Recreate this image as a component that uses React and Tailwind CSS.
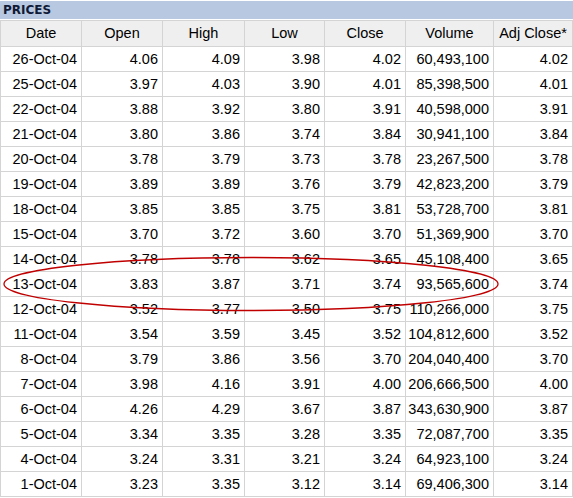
import React from "react";

const rows = [
  ["26-Oct-04", "4.06", "4.09", "3.98", "4.02", "60,493,100", "4.02"],
  ["25-Oct-04", "3.97", "4.03", "3.90", "4.01", "85,398,500", "4.01"],
  ["22-Oct-04", "3.88", "3.92", "3.80", "3.91", "40,598,000", "3.91"],
  ["21-Oct-04", "3.80", "3.86", "3.74", "3.84", "30,941,100", "3.84"],
  ["20-Oct-04", "3.78", "3.79", "3.73", "3.78", "23,267,500", "3.78"],
  ["19-Oct-04", "3.89", "3.89", "3.76", "3.79", "42,823,200", "3.79"],
  ["18-Oct-04", "3.85", "3.85", "3.75", "3.81", "53,728,700", "3.81"],
  ["15-Oct-04", "3.70", "3.72", "3.60", "3.70", "51,369,900", "3.70"],
  ["14-Oct-04", "3.78", "3.78", "3.62", "3.65", "45,108,400", "3.65"],
  ["13-Oct-04", "3.83", "3.87", "3.71", "3.74", "93,565,600", "3.74"],
  ["12-Oct-04", "3.52", "3.77", "3.50", "3.75", "110,266,000", "3.75"],
  ["11-Oct-04", "3.54", "3.59", "3.45", "3.52", "104,812,600", "3.52"],
  ["8-Oct-04", "3.79", "3.86", "3.56", "3.70", "204,040,400", "3.70"],
  ["7-Oct-04", "3.98", "4.16", "3.91", "4.00", "206,666,500", "4.00"],
  ["6-Oct-04", "4.26", "4.29", "3.67", "3.87", "343,630,900", "3.87"],
  ["5-Oct-04", "3.34", "3.35", "3.28", "3.35", "72,087,700", "3.35"],
  ["4-Oct-04", "3.24", "3.31", "3.21", "3.24", "64,923,100", "3.24"],
  ["1-Oct-04", "3.23", "3.35", "3.12", "3.14", "69,406,300", "3.14"],
];

const headers = ["Date", "Open", "High", "Low", "Close", "Volume", "Adj Close*"];

export default function App() {
  return (
    <div className="w-[573px] h-[498px] bg-white relative overflow-hidden">
      <div className="mt-px h-[18px] bg-[#b8c8e1] flex items-center pl-[3px]">
        <span
          className="text-[12px] font-bold text-[#101a36] leading-none"
          style={{ fontFamily: '"DejaVu Sans", Verdana, sans-serif' }}
        >
          PRICES
        </span>
      </div>
      <div
        className="mt-px grid grid-cols-[80px_80px_81px_79px_80px_87px_78px] gap-px bg-[#d4d4d4] p-px text-[14.5px] text-black"
        style={{ fontFamily: '"Liberation Sans", Arial, sans-serif' }}
      >
        {headers.map((h) => (
          <div key={h} className="h-[25px] bg-[#efefef] flex items-center justify-center leading-none">
            {h}
          </div>
        ))}
        {rows.map((r, i) =>
          r.map((c, j) => (
            <div
              key={i + "-" + j}
              className="h-[24px] bg-white flex items-center justify-end pr-[4px] leading-none"
            >
              {c}
            </div>
          ))
        )}
      </div>
      <svg className="absolute left-0 top-0 pointer-events-none" width="573" height="498">
        <ellipse cx="251" cy="284" rx="247" ry="26.5" fill="none" stroke="#c00000" strokeWidth="1.3" />
      </svg>
    </div>
  );
}
